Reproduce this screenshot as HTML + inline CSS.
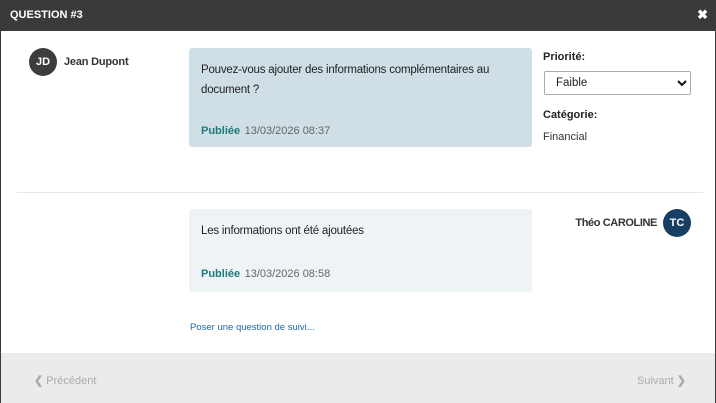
<!DOCTYPE html>
<html><head><meta charset="utf-8"><style>
*{margin:0;padding:0;box-sizing:border-box}
body{width:716px;height:403px;overflow:hidden;background:#fff;font-family:"Liberation Sans",sans-serif;position:relative}
.a{position:absolute}
.hdr{left:0;top:0;width:716px;height:31px;background:#3a3b39;color:#fff;font-weight:bold;font-size:11px;line-height:31px;padding-left:10px}
.av{width:28px;height:28px;border-radius:50%;color:#fff;font-weight:bold;font-size:11px;text-align:center;line-height:28px}
.name{font-size:11px;font-weight:bold;color:#333;letter-spacing:-0.2px}
.msg{border-radius:3px;font-size:11.5px;color:#222;padding:12px 12px;line-height:20px;letter-spacing:-0.2px}
.pub{color:#1f7a7a;font-weight:bold;font-size:11px}
.dt{color:#666;font-size:11px}
.lbl{font-size:11px;font-weight:bold;color:#222}
</style></head><body>
<div class="a hdr">QUESTION #3</div>
<div class="a" style="left:0;top:0;width:1px;height:403px;background:#3a3b39"></div>
<div class="a" style="right:0;top:0;width:1px;height:403px;background:#3a3b39"></div>
<div class="a" style="right:8px;top:7px;color:#fff;font-weight:bold;font-size:13px">✖</div>
<div class="a av" style="left:29px;top:48px;background:#3d3d3d">JD</div>
<div class="a name" style="left:64px;top:56px">Jean Dupont</div>
<div class="a msg" style="left:189px;top:48px;width:343px;height:99px;background:#cfdfe5">Pouvez-vous ajouter des informations complémentaires au document ?</div>
<div class="a" style="left:201px;top:121px"><span class="pub">Publiée</span> <span class="dt">13/03/2026 08:37</span></div>
<div class="a lbl" style="left:543px;top:51px">Priorité:</div>
<div class="a" style="left:544px;top:71px;width:147px;height:24px;border:1px solid #aaa;border-radius:2px;font-size:11.5px;color:#222;line-height:22px;padding-left:11px">Faible</div>
<svg class="a" style="left:677px;top:79px" width="10" height="8" viewBox="0 0 10 8"><path d="M1 2l4 4 4-4" stroke="#111" stroke-width="2" fill="none"/></svg>
<div class="a lbl" style="left:543px;top:109px">Catégorie:</div>
<div class="a" style="left:543px;top:131px;font-size:11px;color:#333">Financial</div>
<div class="a" style="left:17px;top:192px;width:686px;height:1px;background:#e8e8e8"></div>
<div class="a msg" style="left:189px;top:209px;width:343px;height:83px;background:#eef3f5">Les informations ont été ajoutées</div>
<div class="a" style="left:201px;top:264px"><span class="pub">Publiée</span> <span class="dt">13/03/2026 08:58</span></div>
<div class="a name" style="right:59px;top:217px;letter-spacing:-0.4px">Théo CAROLINE</div>
<div class="a av" style="left:663px;top:209px;background:#173e63">TC</div>
<div class="a" style="left:190px;top:322px;font-size:9.5px;color:#1f67a8">Poser une question de suivi...</div>
<div class="a" style="left:1px;top:353px;width:714px;height:50px;background:#ebebeb"></div>
<div class="a" style="left:34px;top:374px;font-size:11px;color:#aaa"><b>❮</b> Précédent</div>
<div class="a" style="right:30px;top:374px;font-size:11px;color:#aaa">Suivant <b>❯</b></div>
</body></html>
